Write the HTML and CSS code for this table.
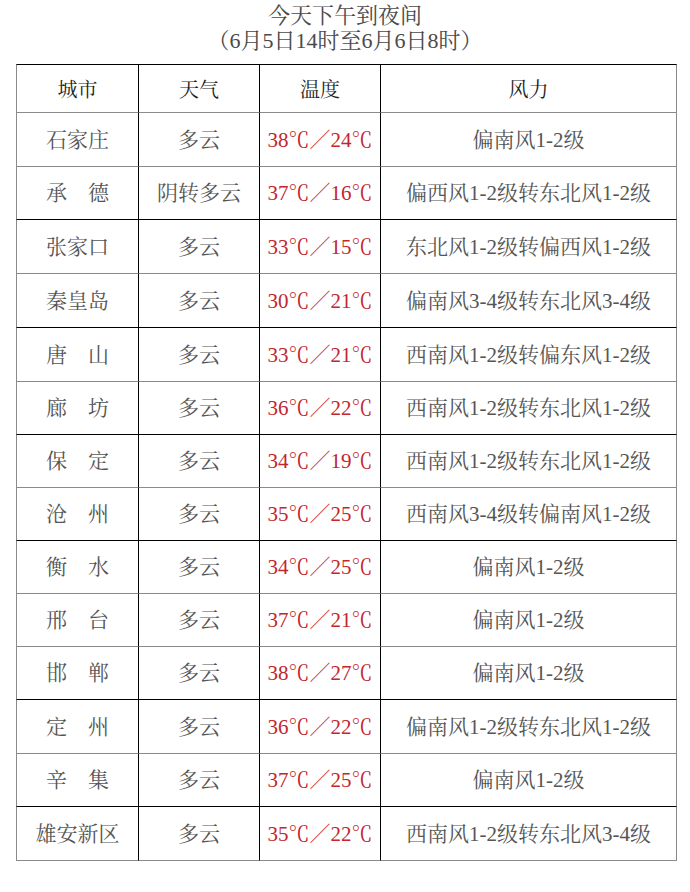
FILE: index.html
```html
<!DOCTYPE html>
<html lang="zh-CN">
<head>
<meta charset="utf-8">
<title>今天下午到夜间</title>
<link rel="stylesheet" href="styles.css">
</head>
<body>
<div class="page">
  <div class="title">
    <div>今天下午到夜间</div>
    <div>（6月5日14时至6月6日8时）</div>
  </div>
  <table class="wx">
    <thead>
      <tr><th class="c1">城市</th><th class="c2">天气</th><th class="c3">温度</th><th class="c4">风力</th></tr>
    </thead>
    <tbody>
      <tr class="h54"><td>石家庄</td><td>多云</td><td class="t">38℃／24℃</td><td>偏南风1-2级</td></tr>
      <tr class="d"><td>承　德</td><td>阴转多云</td><td class="t">37℃／16℃</td><td>偏西风1-2级转东北风1-2级</td></tr>
      <tr class="h54"><td>张家口</td><td>多云</td><td class="t">33℃／15℃</td><td>东北风1-2级转偏西风1-2级</td></tr>
      <tr class="h54 d"><td>秦皇岛</td><td>多云</td><td class="t">30℃／21℃</td><td>偏南风3-4级转东北风3-4级</td></tr>
      <tr class="h54"><td>唐　山</td><td>多云</td><td class="t">33℃／21℃</td><td>西南风1-2级转偏东风1-2级</td></tr>
      <tr class="d"><td>廊　坊</td><td>多云</td><td class="t">36℃／22℃</td><td>西南风1-2级转东北风1-2级</td></tr>
      <tr><td>保　定</td><td>多云</td><td class="t">34℃／19℃</td><td>西南风1-2级转东北风1-2级</td></tr>
      <tr class="d"><td>沧　州</td><td>多云</td><td class="t">35℃／25℃</td><td>西南风3-4级转偏南风1-2级</td></tr>
      <tr><td>衡　水</td><td>多云</td><td class="t">34℃／25℃</td><td>偏南风1-2级</td></tr>
      <tr><td>邢　台</td><td>多云</td><td class="t">37℃／21℃</td><td>偏南风1-2级</td></tr>
      <tr class="d"><td>邯　郸</td><td>多云</td><td class="t">38℃／27℃</td><td>偏南风1-2级</td></tr>
      <tr class="h54"><td>定　州</td><td>多云</td><td class="t">36℃／22℃</td><td>偏南风1-2级转东北风1-2级</td></tr>
      <tr class="d"><td>辛　集</td><td>多云</td><td class="t">37℃／25℃</td><td>偏南风1-2级</td></tr>
      <tr class="h54"><td>雄安新区</td><td>多云</td><td class="t">35℃／22℃</td><td>西南风1-2级转东北风3-4级</td></tr>
    </tbody>
  </table>
</div>
</body>
</html>
```

FILE: styles.css
```css
html, body {
  margin: 0;
  padding: 0;
  background: #ffffff;
}

.page {
  width: 690px;
  font-family: "Liberation Serif", "Noto Serif CJK SC", "Noto Sans CJK SC", serif;
}

.title {
  padding-top: 3px;
  margin-bottom: 11px;
  text-align: center;
  font-size: 22px;
  line-height: 25px;
  color: #4a4a4a;
}

.wx {
  margin-left: 16px;
  width: 661px;
  table-layout: fixed;
  border-collapse: separate;
  border-spacing: 0;
  font-size: 21px;
  color: #555555;
}

.wx th,
.wx td {
  box-sizing: border-box;
  padding: 2px 0 0 0;
  text-align: center;
  vertical-align: middle;
  white-space: nowrap;
  border-right: 1px solid #000000;
  border-bottom: 1px solid #8a8a8a;
  line-height: 1.2;
}

.wx th:first-child,
.wx td:first-child {
  border-left: 1px solid #8a8a8a;
}

.wx th:last-child,
.wx td:last-child {
  border-right-color: #8a8a8a;
}

.wx th {
  height: 49px;
  border-top: 1px solid #000000;
  font-weight: normal;
  color: #1e1e1e;
  font-size: 20px;
}

.wx .c1 { width: 123px; }
.wx .c2 { width: 121px; }
.wx .c3 { width: 121px; }
.wx .c4 { width: 296px; }

.wx td {
  height: 53px;
}

.wx tr.h54 td {
  height: 54px;
}

.wx tr.d td {
  border-bottom-color: #000000;
}

.wx td.t {
  color: #c3262d;
}
```
